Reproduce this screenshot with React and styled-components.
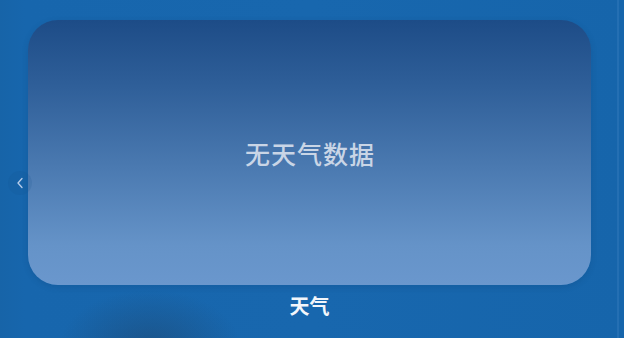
import React from 'react'
import styled, { createGlobalStyle } from 'styled-components';

const GlobalStyle = createGlobalStyle`
    html, body {
        margin: 0;
        padding: 0;
        width: 100%;
        height: 100%;
        overflow: hidden;
    }
    body {
        font-family: "Noto Sans CJK SC", "Noto Sans", sans-serif;
    }
`;

function App() {
    return (
        <>
            <GlobalStyle />
            <Screen>
                <Pager aria-label="previous">
                    <svg width="8" height="12" viewBox="0 0 8 12">
                        <path d="M6 1.5 L2 6 L6 10.5" fill="none" stroke="#b8cdea" strokeWidth="1.3" strokeLinecap="round" strokeLinejoin="round" />
                    </svg>
                </Pager>
                <Widget>
                    <Empty>无天气数据</Empty>
                </Widget>
                <Label>天气</Label>
                <EdgeGlow />
            </Screen>
        </>
    )
}

export default App;

const Screen = styled.div`
    position: relative;
    width: 624px;
    height: 338px;
    box-sizing: border-box;
    padding: 20px 33px 0 28px;
    display: flex;
    flex-direction: column;
    align-items: stretch;
    background:
        radial-gradient(ellipse 90px 55px at 150px 345px, rgba(30, 70, 110, 0.55), rgba(30, 70, 110, 0) 100%),
        linear-gradient(90deg, #1764a8 0%, #1766ad 4%, #1867ae 50%, #1665ab 100%);
`;

const EdgeGlow = styled.div`
    position: absolute;
    top: 0;
    right: 5px;
    width: 2px;
    height: 100%;
    background: rgba(120, 170, 225, 0.15);
`;

const Pager = styled.div`
    position: absolute;
    left: 8px;
    top: 171px;
    width: 24px;
    height: 24px;
    border-radius: 50%;
    background: rgba(20, 80, 140, 0.15);
    display: flex;
    align-items: center;
    justify-content: center;
    padding-right: 1px;
    box-sizing: border-box;
`;

const Widget = styled.div`
    height: 265px;
    border-radius: 30px;
    background: linear-gradient(180deg, #1d4c87 0%, #2f5f99 25%, #4a79b0 55%, #6593c8 85%, #6a97cd 100%);
    display: flex;
    align-items: center;
    justify-content: center;
    box-sizing: border-box;
    box-shadow: 0 2px 6px rgba(10, 40, 80, 0.15);
`;

const Empty = styled.div`
    font-size: 25px;
    font-weight: 500;
    color: #c9d5e6;
    letter-spacing: 1px;
    margin-left: 1px;
`;

const Label = styled.div`
    margin-top: 6px;
    text-align: center;
    font-size: 20px;
    font-weight: 700;
    color: #f2f6fb;
`;
